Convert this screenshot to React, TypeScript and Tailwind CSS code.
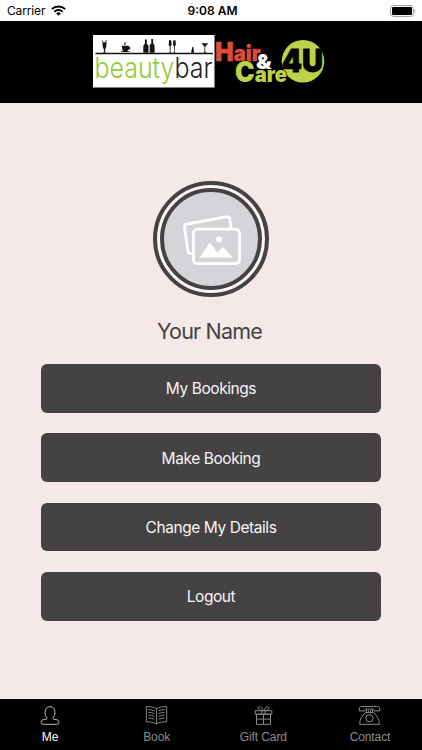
import React from 'react';
import clsx from 'clsx';

type Tab = {
  label: string;
  icon: React.ReactNode;
  active?: boolean;
};

const actions = ['My Bookings', 'Make Booking', 'Change My Details', 'Logout'];

const tabs: Tab[] = [
  { label: 'Me', icon: <PersonIcon />, active: true },
  { label: 'Book', icon: <BookIcon /> },
  { label: 'Gift Card', icon: <GiftIcon /> },
  { label: 'Contact', icon: <PhoneIcon /> },
];

function PersonIcon() {
  return (
    <svg width="22" height="23" viewBox="0 0 22 23" fill="none" stroke="#d0d0d0" strokeWidth=".9">
      <path d="M8.300 13C6.800 11.800 6 9.700 6 7.400C6 3.900 8 1.600 11 1.600s5 2.300 5 5.800c0 2.300-.8 4.400-2.300 5.600c.2.900 1 1.300 2.300 1.400c2.800.2 3.900 1.100 3.900 3c0 1.200-.5 1.900-1.600 1.900H3.700c-1.100 0-1.600-.7-1.600-1.900c0-1.900 1.100-2.800 3.900-3c1.300-.1 2.100-.5 2.300-1.400z" />
    </svg>
  );
}

function BookIcon() {
  return (
    <svg width="23" height="23" viewBox="0 0 22 22" fill="none" stroke="currentColor" strokeWidth=".9">
      <path d="M11 3.500C8.500 2 5 1.500 1.300 1.500V16c3.700 0 7.200.6 9.700 2.100c2.500-1.500 6-2.100 9.700-2.100V1.500C17 1.500 13.500 2 11 3.500zM11 3.500V18" />
      <path d="M3.300 4.300c2 .1 4 .6 5.700 1.200M3.300 7c2 .1 4 .6 5.700 1.200M3.300 9.700c2 .1 4 .6 5.700 1.200M3.300 12.400c2 .1 4 .6 5.700 1.200M18.700 4.300c-2 .1-4 .6-5.700 1.200M18.700 7c-2 .1-4 .6-5.700 1.200M18.700 9.700c-2 .1-4 .6-5.700 1.200M18.700 12.400c-2 .1-4 .6-5.700 1.200" />
    </svg>
  );
}

function GiftIcon() {
  return (
    <svg width="23" height="23" viewBox="0 0 22 22" fill="none" stroke="currentColor" strokeWidth=".95">
      <path d="M3 5.500h16v3.300H3zM4.300 8.800h13.400v9.700H4.300zM11 8.800v9.700M4.300 13.500h13.400M9.500 5.500v3.300M12.500 5.500v3.300" />
      <path d="M10.500 5.300C9 5.300 5.700 4.800 5.700 2.900c0-1 .9-1.500 1.800-1.300c1.400.3 2.500 2 3 3.700zM11.500 5.300c1.500 0 4.800-.5 4.800-2.400c0-1-.9-1.500-1.800-1.300c-1.400.3-2.500 2-3 3.700z" />
    </svg>
  );
}

function PhoneIcon() {
  return (
    <svg width="23" height="23" viewBox="0 0 22 22" fill="none" stroke="currentColor" strokeWidth=".95">
      <path d="M1.300 5.700V3c0-1 .7-1.500 1.700-1.500h16c1 0 1.700.5 1.700 1.500v2.700h-5c0-1.100-.5-1.700-1.500-1.700H7.800c-1 0-1.500.6-1.500 1.700z" />
      <path d="M8 4v3.200M10 5.200v2M12 5.200v2M14 4v3.200M7.200 7.200h7.600c3.200 3 5.600 6 5.600 11.300H1.600C1.600 13.200 4 10.200 7.200 7.200z" />
      <circle cx="11" cy="12.700" r="3.500" />
    </svg>
  );
}

function StatusBar() {
  return (
    <div className="grid h-[21px] shrink-0 grid-cols-3 items-center bg-[#fdfdfd] pl-[7px] pr-[6px] font-['Inter','Liberation_Sans',sans-serif] text-black">
      <div className="flex items-center gap-[6px] text-[12px] leading-none tracking-[-0.15px]">
        <span>Carrier</span>
        <svg width="15" height="11" viewBox="0 0 15 11" fill="none" stroke="#000" strokeWidth="1.9">
          <path d="M.8 4.200a9.500 9.500 0 0 1 13.400 0M3.300 6.800a5.900 5.900 0 0 1 8.400 0" />
          <path d="M5.200 8.400a3.300 3.300 0 0 1 4.600 0L7.500 10.800z" fill="#000" stroke="none" />
        </svg>
      </div>
      <span className="pl-[2px] text-center text-[12px] font-semibold leading-none">9:08 AM</span>
      <svg className="justify-self-end" width="26" height="12" viewBox="0 0 26 12">
        <rect x=".6" y=".6" width="22.800" height="10.800" rx="2.800" fill="#fff" stroke="#999" />
        <rect x="2" y="2" width="20" height="8" rx="1.300" fill="#000" />
        <path d="M24.600 4.200c1.300.5 1.300 3.100 0 3.600z" fill="#999" />
      </svg>
    </div>
  );
}

function BeautyBarLogo() {
  return (
    <svg className="overflow-visible" width="122" height="53" viewBox="93 35 122 53">
      <rect x="93" y="35" width="121.500" height="52.500" fill="#fff" />
      <path d="M95.500 53.500H213" stroke="#111" strokeWidth="1.300" />
      <g fill="#151515">
        {/* cocktail */}
        <path d="M102.300 42.200h4.400l-.6 5.300l-1 2v2.500l1.400.8h-4l1.400-.8v-2.500l-1-2z" />
        <path d="M102.800 42l-.8-1.500M105.300 42l1.500-2" stroke="#151515" strokeWidth=".8" />
        {/* cup */}
        <path d="M122 45.800h6.800v1c2.300-.6 2.200 3-.6 3l-.9 1.400h2.400v.9h-8.700v-.9h2.200c-1-1.100-1.200-3-1.200-5.400zM124 45l.7-2l-.2-1h1l.2 1.200l-.7 1.800z" />
        {/* bottles */}
        <path d="M144.900 39.500h1.900v4.300l1.700 2v7h-5.200v-7l1.600-2zM151.300 39h1.800v4.300l1.500 2v7.500h-4.900v-7.500l1.600-2z" />
        {/* glasses */}
        <path d="M169 40.200h2.300l.3 4.700l-1.100 1.500v5.600l1 .8h-2.800l1-.8v-5.600l-1-1.500zM173.300 40.200h2.200l.3 4.700l-1.100 1.500v5.600l1 .8h-2.700l1-.8v-5.600l-1-1.500z" />
        <path d="M192.300 47h1l.9 5.800H191zM201.500 43.200h6.800l-3 3.600v5l1.500 1h-3.800l1.500-1v-5z" />
      </g>
      <text x="94.500" y="78.300" fontSize="29" fontFamily="Inter, sans-serif" fontWeight="300" textLength="118" lengthAdjust="spacingAndGlyphs">
        <tspan fill="#94c93d">beauty</tspan>
        <tspan fill="#222">bar</tspan>
      </text>
    </svg>
  );
}

function HairCareLogo() {
  return (
    <svg className="overflow-visible" width="112" height="53" viewBox="215 35 112 53" fontFamily="Inter, 'Liberation Sans', sans-serif" fontWeight="900">
      <circle cx="303" cy="61.300" r="21.300" fill="#bdd247" />
      <text x="215" y="60.800" fontSize="26" textLength="45.500" lengthAdjust="spacingAndGlyphs" fill="#dd4b3b" stroke="#dd4b3b" strokeWidth=".4">
        H<tspan fontSize="21">air</tspan>
      </text>
      <text x="235" y="81.700" fontSize="28" textLength="52" lengthAdjust="spacingAndGlyphs" fill="#bdd247" stroke="#000" strokeWidth="1.200" paintOrder="stroke">
        C<tspan fontSize="21.500">are</tspan>
      </text>
      <text x="256" y="69.300" fontSize="20.500" textLength="15.500" lengthAdjust="spacingAndGlyphs" fill="#fff" stroke="#000" strokeWidth="1.200" paintOrder="stroke">&amp;</text>
      <text x="281.500" y="71.900" fontSize="32" textLength="41.500" lengthAdjust="spacingAndGlyphs" fill="#050505" stroke="#050505" strokeWidth=".8">4U</text>
    </svg>
  );
}

function Avatar() {
  return (
    <div className="size-[116px] rounded-full border-4 border-[#454243] bg-[#fbf4f3] p-[3px]">
      <div className="flex size-full items-center justify-center rounded-full border-4 border-[#454243] bg-[#d5d4d8] pt-[2px] pl-px">
        <svg width="58" height="50" viewBox="0 0 58 50" fill="none" stroke="#fff" strokeWidth="2.800" strokeLinejoin="round" strokeLinecap="round">
          <rect x="10.500" y="14.200" width="46" height="34.500" rx="4" />
          <path d="M7.500 38.500c-1.500 0-2.300-.9-2.600-2.300L1.500 12.500c-.3-2 .7-3.200 2.500-3.500L43 1.800c2.200-.4 3.600.6 3.900 2.600L48 13" />
          <circle cx="36" cy="24.500" r="3" fill="#fff" stroke="none" />
          <path d="M16.500 42.500L27 27.500l7.500 10.200l5.300-6l9.700 10.800z" fill="#fff" stroke="none" />
        </svg>
      </div>
    </div>
  );
}

export default function App() {
  return (
    <div className="flex h-[750px] w-[422px] flex-col overflow-hidden bg-[#f4e9e8]">
      <StatusBar />

      <header className="flex h-[82px] shrink-0 justify-center bg-black pt-[14px] pr-[2px]">
        <BeautyBarLogo />
        <HairCareLogo />
      </header>

      <main className="flex flex-1 flex-col items-center pt-[78px] font-['Inter','Liberation_Sans',sans-serif]">
        <Avatar />
        <h1 className="mt-[18px] h-8 pr-[3px] text-[21.5px] leading-8 tracking-[-0.8px] text-[#454243]">Your Name</h1>
        <div className="mt-[17px] flex w-[340px] flex-col gap-[20.5px]">
          {actions.map((label) => (
            <button key={label} className="h-[48.75px] rounded-md bg-[#454243] pt-px text-[15.5px] tracking-[-0.43px] text-[#f8f5f5]">
              {label}
            </button>
          ))}
        </div>
      </main>

      <nav className="flex h-[51px] shrink-0 justify-between bg-black pl-[10px] pr-[12px] pt-[6px] font-['Liberation_Sans',Arial,sans-serif]">
        {tabs.map(({ label, icon, active }) => (
          <button
            key={label}
            className={clsx('flex w-20 flex-col items-center text-[12px] leading-[14px] tracking-[-0.1px]', active ? 'text-white' : 'text-[#8c8c8c]')}
          >
            {icon}
            <span className="mt-[2px]">{label}</span>
          </button>
        ))}
      </nav>
    </div>
  );
}
